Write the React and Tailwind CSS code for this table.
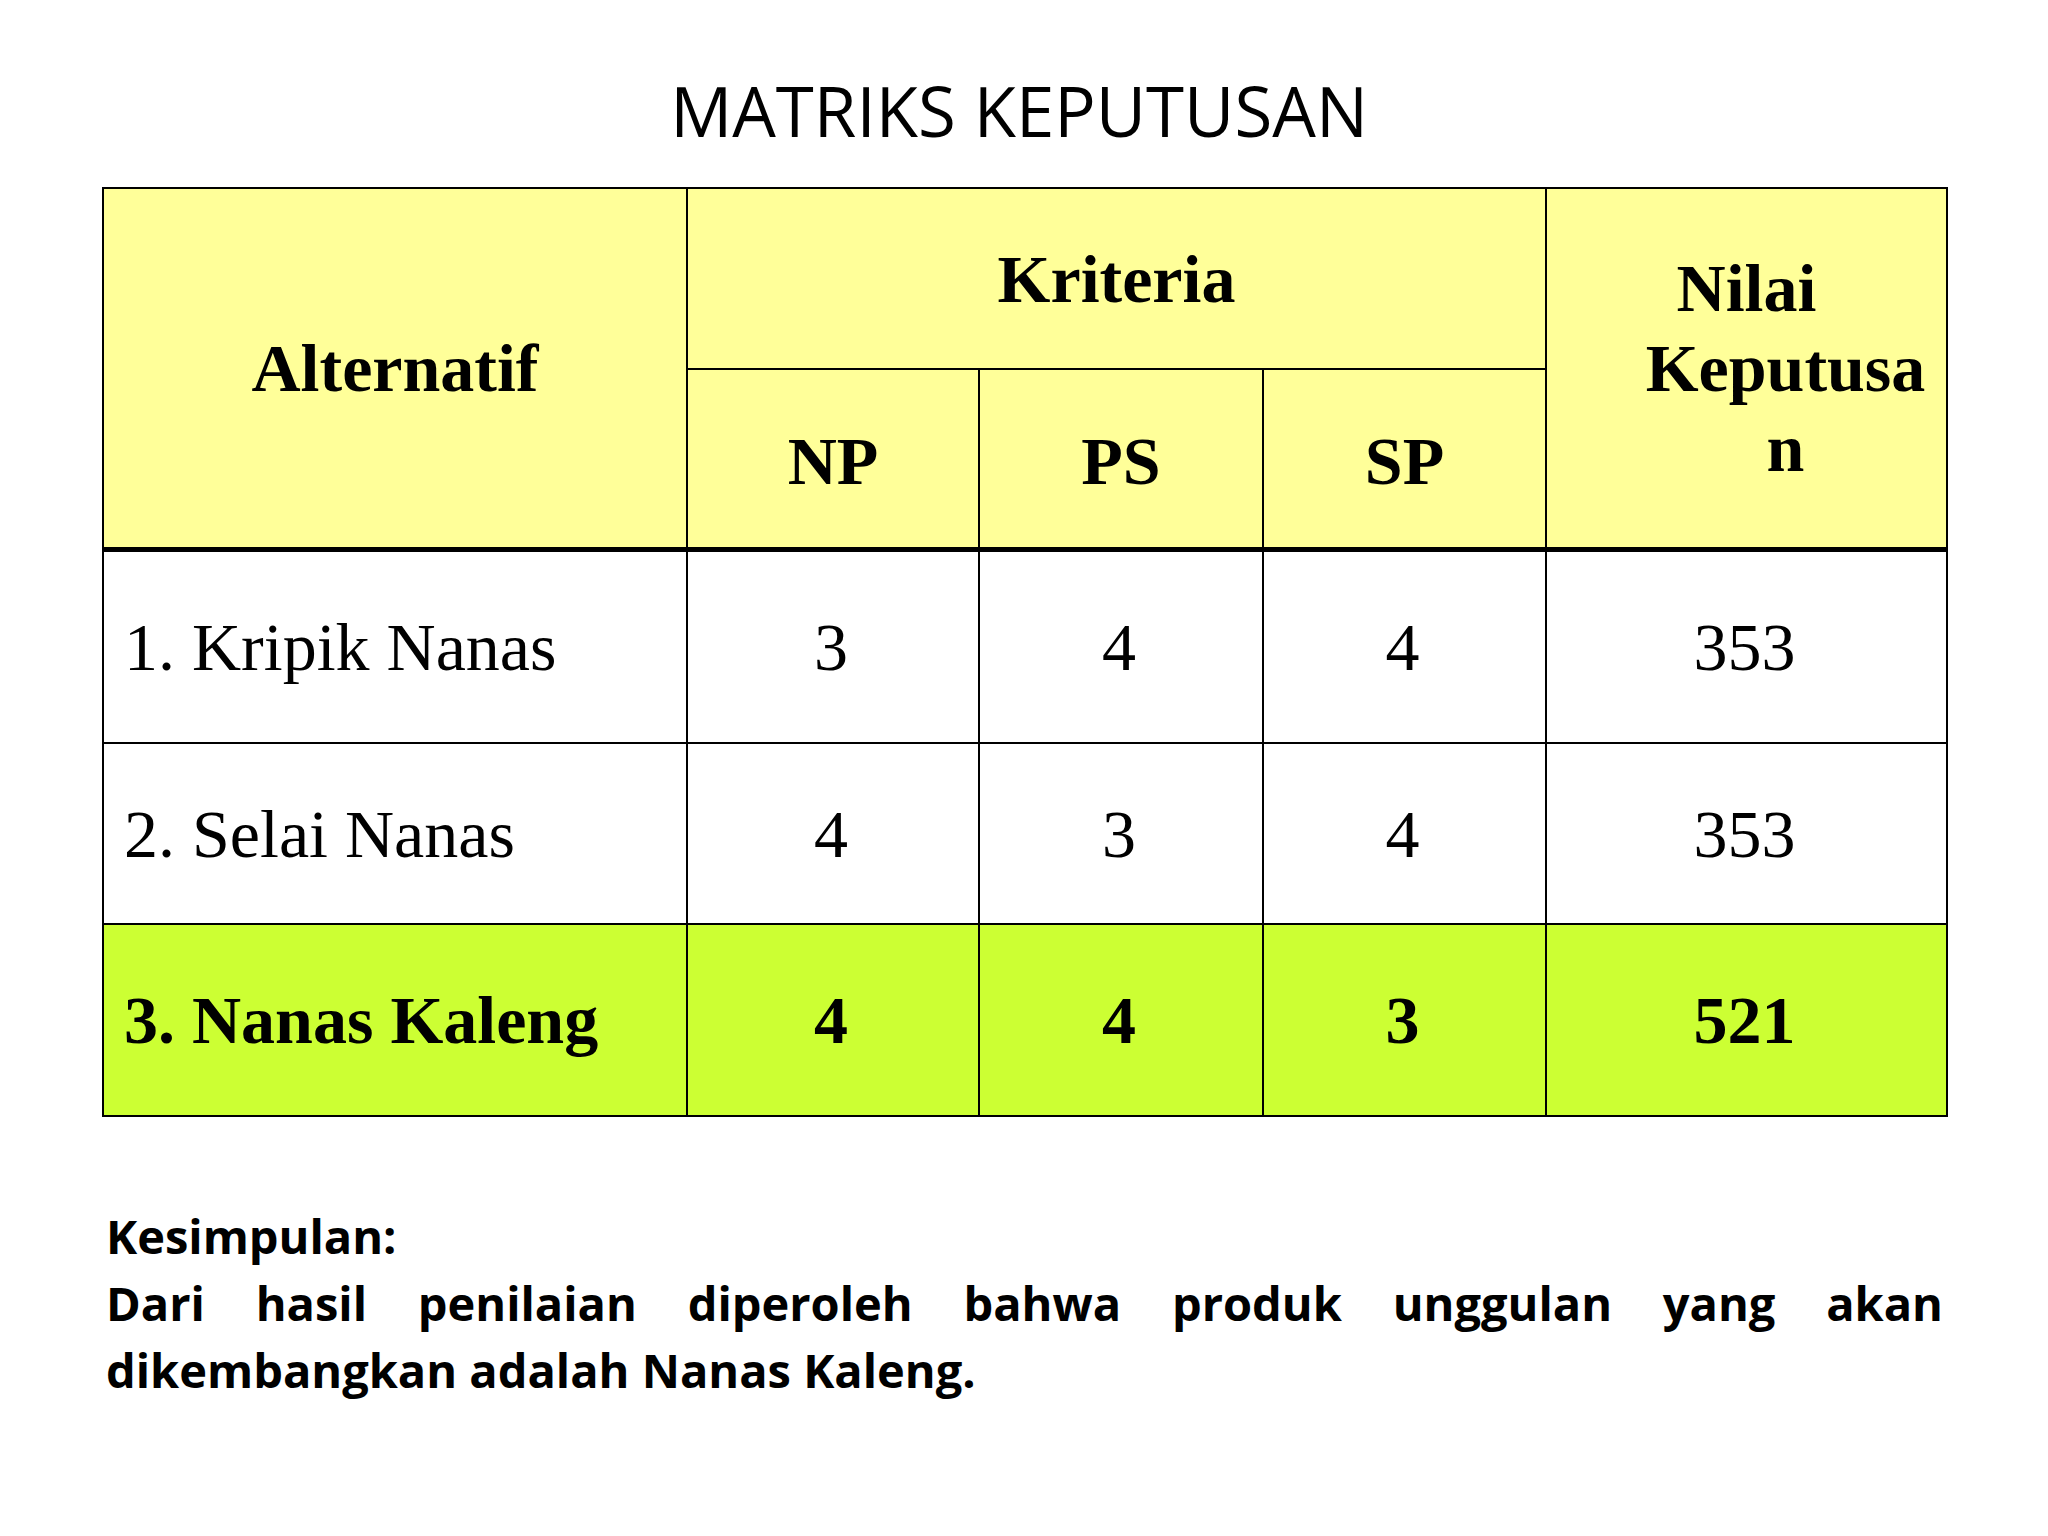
export default function App() {
  const serif = { fontFamily: '"Liberation Serif", "Times New Roman", serif' };
  const rows = [
    { name: "1. Kripik Nanas", v: ["3", "4", "4", "353"], hi: false },
    { name: "2. Selai Nanas", v: ["4", "3", "4", "353"], hi: false },
    { name: "3. Nanas Kaleng", v: ["4", "4", "3", "521"], hi: true },
  ];
  const heights = ["h-[194px]", "h-[181px]", "h-[192px]"];
  return (
    <div className="w-[2048px] h-[1536px] bg-white overflow-hidden">
      <div
        className="pt-[76px] pr-[10px] text-center text-[69px] leading-none text-black"
        style={{ fontFamily: '"Open Sans", sans-serif' }}
      >
        MATRIKS KEPUTUSAN
      </div>
      <div className="pl-[102px] pt-[42px]">
        <table
          className="table-fixed border-collapse border-2 border-black w-[1844px] text-black text-[68px]"
          style={serif}
        >
          <colgroup>
            <col className="w-[584px]" />
            <col className="w-[292px]" />
            <col className="w-[284px]" />
            <col className="w-[283px]" />
            <col className="w-[401px]" />
          </colgroup>
          <thead>
            <tr className="h-[181px]">
              <th
                rowSpan={2}
                className="bg-[#ffff99] border-2 border-black border-b-[5px] p-0 font-bold align-middle text-center leading-none"
              >
                Alternatif
              </th>
              <th
                colSpan={3}
                className="bg-[#ffff99] border-2 border-black p-0 font-bold align-middle text-center leading-none"
              >
                Kriteria
              </th>
              <th
                rowSpan={2}
                className="bg-[#ffff99] border-2 border-black border-b-[5px] p-0 font-bold align-middle leading-[80px]"
              >
                <div className="text-center">Nilai</div>
                <div className="pl-[78px] text-center">
                  Keputusa
                  <br />n
                </div>
              </th>
            </tr>
            <tr className="h-[180px]">
              {["NP", "PS", "SP"].map((k) => (
                <th
                  key={k}
                  className="bg-[#ffff99] border-2 border-black border-b-[5px] p-0 font-bold align-middle text-center leading-none pt-[6px]"
                >
                  {k}
                </th>
              ))}
            </tr>
          </thead>
          <tbody>
            {rows.map((r, i) => (
              <tr
                key={r.name}
                className={`${heights[i]} ${r.hi ? "bg-[#ccff33] font-bold" : "bg-white font-normal"}`}
              >
                <td className="border-2 border-black pl-[20px] pr-0 py-0 align-middle text-left leading-none whitespace-nowrap">
                  {r.name}
                </td>
                {r.v.map((v, j) => (
                  <td
                    key={j}
                    className="border-2 border-black p-0 pr-[4px] align-middle text-center leading-none"
                  >
                    {v}
                  </td>
                ))}
              </tr>
            ))}
          </tbody>
        </table>
      </div>
      <div
        className="ml-[106px] mt-[86px] w-[1837px] text-[47px] leading-[67px] font-bold text-black"
        style={{ fontFamily: '"Open Sans", sans-serif' }}
      >
        <div>Kesimpulan:</div>
        <div className="text-justify [text-align-last:justify]">
          Dari hasil penilaian diperoleh bahwa produk unggulan yang akan
        </div>
        <div>dikembangkan adalah Nanas Kaleng.</div>
      </div>
    </div>
  );
}
